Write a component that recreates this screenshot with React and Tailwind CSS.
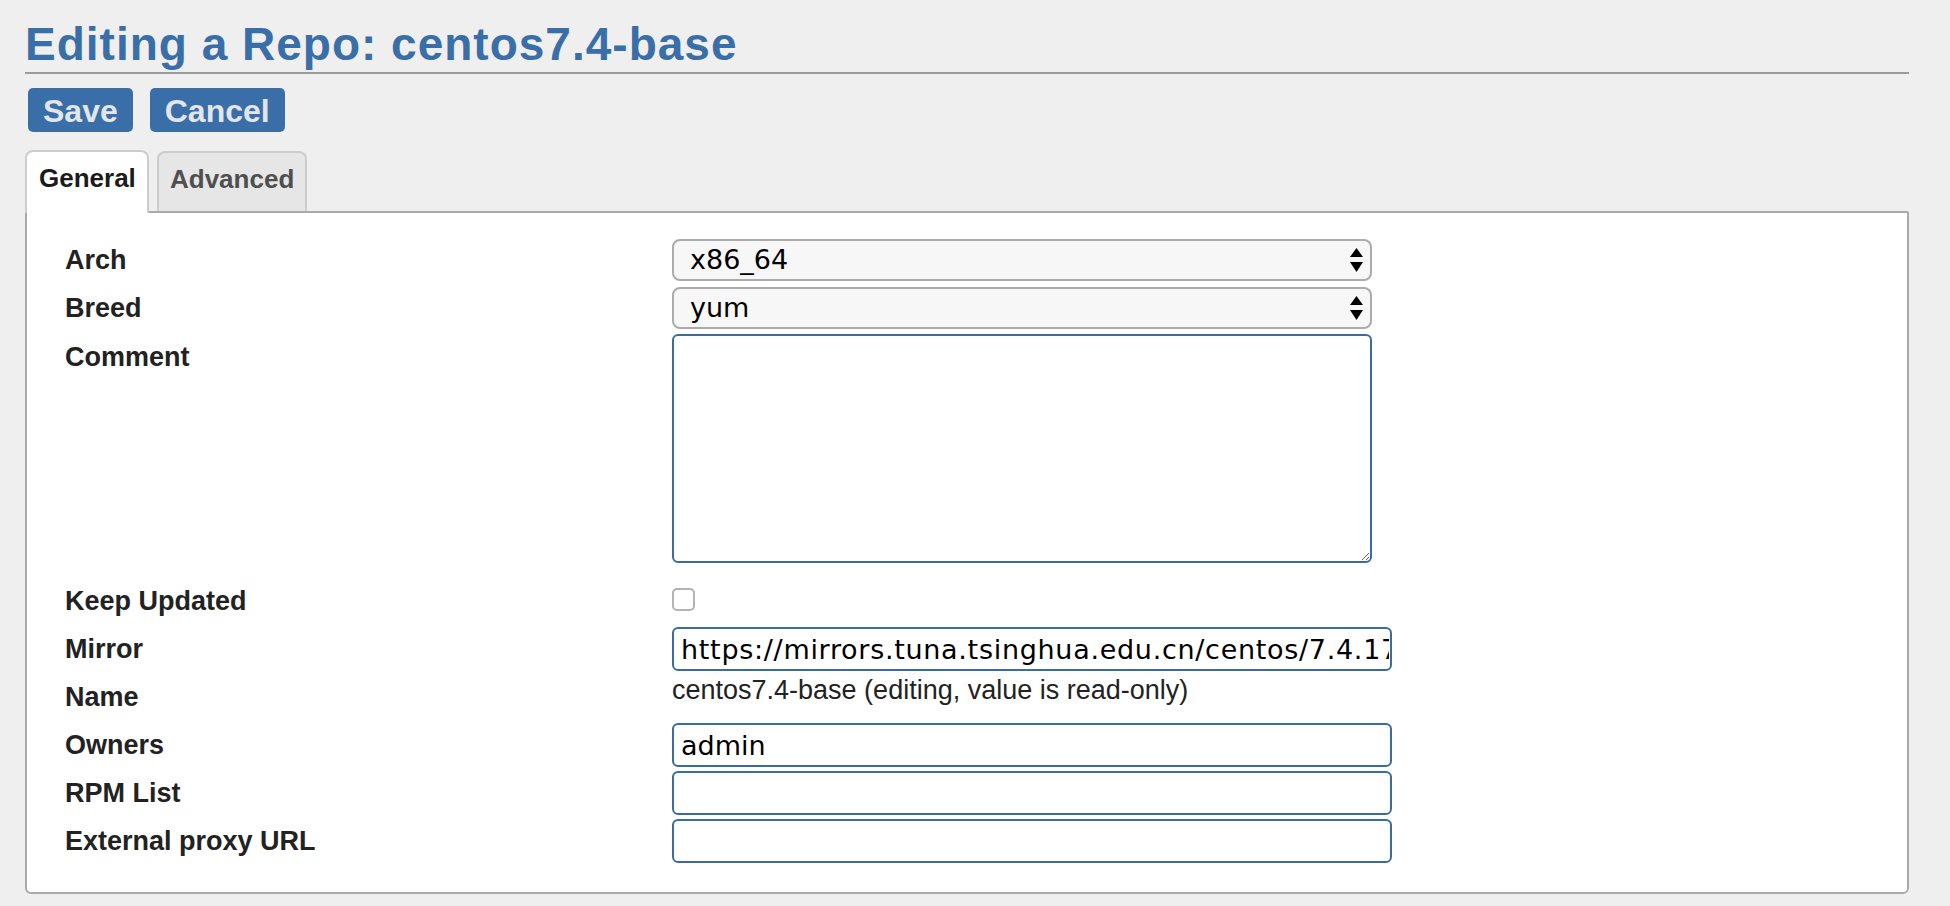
const inputFont = "font-['DejaVu_Sans',Verdana,sans-serif]"

const SelectArrows = () => (
    <svg width="13" height="24" viewBox="0 0 13 24" className="shrink-0">
        <polygon points="6.5,0 13,9 0,9" fill="#000" />
        <polygon points="0,14 13,14 6.5,24" fill="#000" />
    </svg>
)

const FakeSelect = ({ value }) => (
    <div className={`w-[700px] h-[42px] rounded-[8px] border-2 border-[#ababab] bg-[#f7f7f7] flex items-center justify-between pl-[16px] pr-[7px] ${inputFont} text-[27px] leading-[38px] text-black`}>
        <span>{value}</span>
        <SelectArrows />
    </div>
)

const TextInput = ({ value = "", wide = false }) => (
    <input
        type="text"
        readOnly
        value={value}
        className={`block w-[720px] h-[44px] rounded-[6px] border-2 border-[#3b6ba3] bg-white pl-[7px] pr-[1px] ${inputFont} text-[27px] text-black outline-none ${wide ? "tracking-[0.7px]" : ""}`}
    />
)

const Label = ({ children, leading = "leading-[42px]" }) => (
    <div className={`w-[607px] shrink-0 font-bold text-[27px] text-[#222] ${leading}`}>
        {children}
    </div>
)

const App = () => {
    return (
        <div className="min-h-screen bg-[#efefef] pt-[21px] font-['Liberation_Sans',Arial,sans-serif]">
            <div className="ml-[25px] w-[1884px]">
                {/* Header */}
                <h1 className="text-[46px] leading-[46px] tracking-[1px] font-bold text-[#3a6ea9] pb-[5px] border-b-2 border-[#9a9a9a]">
                    Editing a Repo: centos7.4-base
                </h1>

                <div className="flex gap-[17px] mt-[14px] ml-[3px]">
                    <button className="h-[44px] px-[15px] rounded-[5px] bg-[#3a6ea9] text-[#e2e5ea] text-[32px] leading-[46px] font-bold">
                        Save
                    </button>
                    <button className="h-[44px] px-[15px] rounded-[5px] bg-[#3a6ea9] text-[#e2e5ea] text-[32px] leading-[46px] font-bold">
                        Cancel
                    </button>
                </div>

                {/* Tabs */}
                <div className="flex items-end gap-[8px] mt-[18px]">
                    <div className="relative z-10 -mb-[2px] w-[124px] h-[63px] bg-white border-2 border-b-0 border-[#cdcdcd] rounded-t-[8px] pl-[12px] text-[26px] leading-[52px] font-bold text-[#1b1b1b]">
                        General
                    </div>
                    <div className="w-[150px] h-[60px] bg-[#e6e6e6] border-2 border-b-0 border-[#cdcdcd] rounded-t-[8px] pl-[11px] text-[26px] leading-[52px] font-bold text-[#4f4f4f]">
                        Advanced
                    </div>
                </div>

                {/* Panel */}
                <div className="bg-white border-2 border-[#a9a9a9] rounded-b-[6px] rounded-tr-[2px] pt-[26px] pb-[29px] pl-[38px]">
                    <div className="flex items-start">
                        <Label>Arch</Label>
                        <FakeSelect value="x86_64" />
                    </div>
                    <div className="flex items-start mt-[6px]">
                        <Label>Breed</Label>
                        <FakeSelect value="yum" />
                    </div>
                    <div className="flex items-start mt-[5px]">
                        <Label leading="leading-[46px]">Comment</Label>
                        <textarea className="block w-[700px] h-[229px] rounded-[6px] border-2 border-[#3b6ba3] bg-white outline-none" />
                    </div>
                    <div className="flex items-start mt-[17px]">
                        <Label>Keep Updated</Label>
                        <div className="mt-[8px] w-[23px] h-[23px] rounded-[5px] border-2 border-[#b3b3b3] bg-white" />
                    </div>
                    <div className="flex items-start mt-[5px]">
                        <Label leading="leading-[44px]">Mirror</Label>
                        <TextInput wide value="https://mirrors.tuna.tsinghua.edu.cn/centos/7.4.1708/os/x86_64/" />
                    </div>
                    <div className="flex items-start">
                        <Label leading="leading-[52px]">Name</Label>
                        <div className="text-[27px] leading-[38px] text-[#222]">
                            centos7.4-base (editing, value is read-only)
                        </div>
                    </div>
                    <div className="flex items-start">
                        <Label leading="leading-[44px]">Owners</Label>
                        <TextInput value="admin" />
                    </div>
                    <div className="flex items-start mt-[4px]">
                        <Label leading="leading-[44px]">RPM List</Label>
                        <TextInput />
                    </div>
                    <div className="flex items-start mt-[4px]">
                        <Label leading="leading-[44px]">External proxy URL</Label>
                        <TextInput />
                    </div>
                </div>
            </div>
        </div>
    )
}

export default App
